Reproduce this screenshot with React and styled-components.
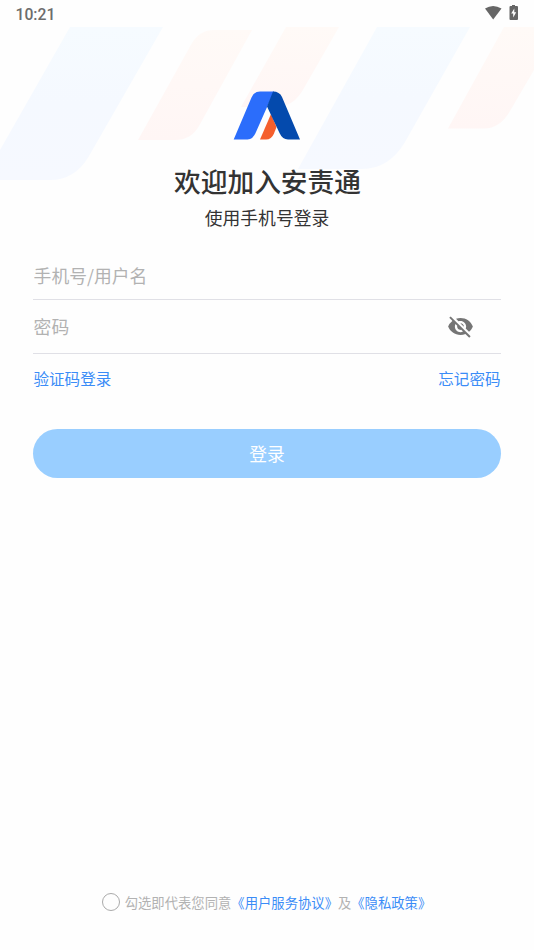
import React, { useState } from 'react'
import styled, { createGlobalStyle } from 'styled-components';
import { MdVisibilityOff } from 'react-icons/md';

const App = () => {
  const [agreed, setAgreed] = useState(false);

  return (
    <Screen>
      <GlobalStyle />
      <Stripes />
      <StatusBar>
        <span>10:21</span>
        <StatusIcons />
      </StatusBar>
      <Header>
        <Logo />
        <h1>欢迎加入安责通</h1>
        <p>使用手机号登录</p>
      </Header>
      <Form onSubmit={e => e.preventDefault()}>
        <Field $height={47}>
          <input type='text' placeholder='手机号/用户名' />
        </Field>
        <Field $height={53}>
          <input type='password' placeholder='密码' />
          <MdVisibilityOff size={27} color='#757575' />
        </Field>
        <LinkRow>
          <TextLink href='#'>验证码登录</TextLink>
          <TextLink href='#'>忘记密码</TextLink>
        </LinkRow>
        <LoginButton type='submit'>登录</LoginButton>
      </Form>
      <Agreement>
        <Circle type='button' aria-pressed={agreed} onClick={() => setAgreed(!agreed)} />
        <span>勾选即代表您同意</span>
        <TextLink href='#'>《用户服务协议》</TextLink>
        <span>及</span>
        <TextLink href='#'>《隐私政策》</TextLink>
      </Agreement>
    </Screen>
  )
}

const Stripes = () => (
  <StripesSvg width='534' height='190' viewBox='0 0 534 190'>
    <defs>
      <linearGradient id='blue' x1='0' y1='0' x2='0' y2='1'>
        <stop offset='0' stopColor='#f6fbff' />
        <stop offset='0.5' stopColor='#f5f9ff' />
        <stop offset='1' stopColor='#f6f9ff' />
      </linearGradient>
      <linearGradient id='orange' x1='0' y1='0' x2='0' y2='1'>
        <stop offset='0' stopColor='#fffaf7' />
        <stop offset='1' stopColor='#fff6f5' />
      </linearGradient>
    </defs>
    <path fill='url(#blue)' d='M70 27H163L89 156Q75 180 50 180H0V150Z' />
    <path fill='url(#orange)' d='M252 30H214Q200 30 192 43L138 140H175Q191 140 199 126Z' />
    <path fill='url(#orange)' d='M286 27H339L304 88Q294 107 276 107H241Z' />
    <path fill='url(#blue)' d='M377 27H470L405 142Q389 169 362 169H298Z' />
    <path fill='url(#orange)' d='M504 27H534V70L510 111Q500 128.500 484 128.500H448Z' />
  </StripesSvg>
)

const Logo = () => (
  <svg width='68' height='50' viewBox='0 0 68 50'>
    <path fill='#f55f2d' d='M27 48.500L38 23L43.500 36L41 42.500Q38.500 48.500 33 48.500Z' />
    <path fill='#2b6dfb' d='M.7 48.500L18.500 6.500Q21 .5 27 .5H41L34.500 15L23 41Q20 48.500 14.500 48.500Z' />
    <path fill='#044aad' d='M40 .5Q46.500 .5 49 6L67 48.500H55Q49.500 48.500 46.500 42L34 15.500L39 3Z' />
  </svg>
)

const StatusIcons = () => (
  <svg width='36' height='18' viewBox='0 0 36 18'>
    <path fill='#666' d='M2 4.500Q10 -.5 18.500 4.500L10.200 15.500Z' />
    <path fill='#666' d='M29 2V1H32V2H34Q35 2 35 3V15Q35 16 34 16H27.500Q26.500 16 26.500 15V3Q26.500 2 27.500 2Z' />
    <path fill='#fff' d='M31.300 4.500L28.200 9.500H30.200V13.500L33.200 8.300H31.300Z' />
  </svg>
)

export default App


    const GlobalStyle = createGlobalStyle`
        body{
            margin: 0;
            background: #fefefe;
        }
        *{
            box-sizing: border-box;
        }
        body, input, button{
            font-family: 'Noto Sans CJK SC', sans-serif;
        }
     `
    const Screen = styled.div`
            position: relative;
            display: flex;
            flex-direction: column;
            height: 950px;
            overflow: hidden;
     `
    const StripesSvg = styled.svg`
            position: absolute;
            top: 0;
            left: 0;
            z-index: -1;
     `
    const StatusBar = styled.div`
            display: flex;
            justify-content: space-between;
            height: 27px;
            padding: 4px 15px 0 15.500px;
            color: #6c6c6c;
            font: 500 15.700px/21px Roboto, sans-serif;
     `
    const Header = styled.header`
            display: flex;
            flex-direction: column;
            align-items: center;
            padding-top: 64px;
            color: #333;
        h1{
            margin: 18.500px 0 0;
            padding-left: 1px;
            font-size: 26.700px;
            font-weight: 500;
            line-height: 42px;
        }
        p{
            margin: 2.500px 0 0;
            font-size: 17.800px;
            line-height: 26px;
        }
     `
    const Form = styled.form`
            padding: 22px 33px 0;
     `
    const Field = styled.div`
            display: flex;
            align-items: center;
            height: ${props => props.$height + 1}px;
            padding-right: 27px;
            border-bottom: 1px solid #e0e0e6;
        input{
            flex: 1;
            min-width: 0;
            padding: 0 0 1px .6px;
            border: none;
            outline: none;
            background: none;
            color: #333;
            font-size: 17.800px;
        }
        input::placeholder{
            color: #b2b2b2;
        }
     `
    const TextLink = styled.a`
            color: #3a8cf7;
            text-decoration: none;
     `
    const LinkRow = styled.div`
            display: flex;
            justify-content: space-between;
            margin-top: 12px;
            padding: 0 .5px;
            font-size: 15.550px;
            line-height: 24px;
     `
    const LoginButton = styled.button`
            display: block;
            width: 100%;
            height: 49px;
            margin-top: 39px;
            padding: 0 0 2px;
            border: none;
            border-radius: 25px;
            background: #99ceff;
            color: #fff;
            font-size: 17.800px;
     `
    const Agreement = styled.div`
            display: flex;
            align-items: center;
            justify-content: center;
            margin-top: auto;
            padding: 0 1px 37px 0;
            color: #b2b2b2;
            font-size: 13.330px;
            line-height: 20px;
     `
    const Circle = styled.button`
            width: 18px;
            height: 18px;
            margin: 0 5px 2px 0;
            padding: 0;
            border: 1px solid #aaa;
            border-radius: 50%;
            background: ${props => props['aria-pressed'] ? '#3a8cf7' : 'none'};
     `
